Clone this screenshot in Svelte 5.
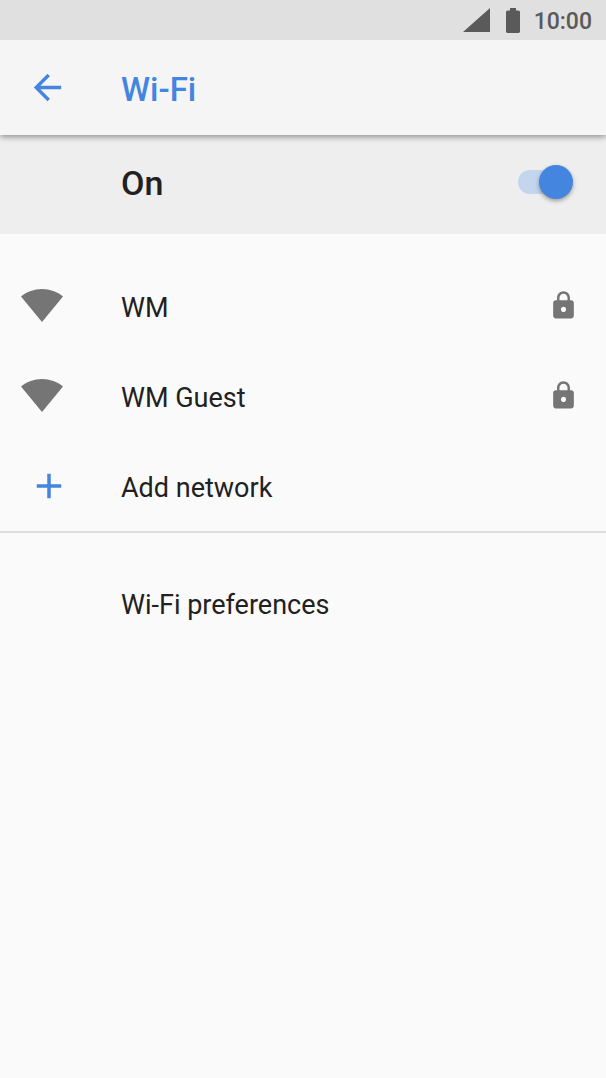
<script>
    let enabled = true;

    const networks = [
        { name: 'WM', secured: true },
        { name: 'WM Guest', secured: true }
    ];
</script>

<div class="screen">
    <div class="status-bar">
        <svg class="signal" viewBox="0 0 27 24" aria-hidden="true">
            <path d="M0 24L27 0V24Z" />
        </svg>
        <svg class="battery" viewBox="0 0 14 25" aria-hidden="true">
            <path d="M4 0h6v2.5h2.2c1 0 1.8.8 1.8 1.8v18.9c0 1-.8 1.8-1.8 1.8H1.8C.8 25 0 24.2 0 23.2V4.300c0-1 .8-1.800 1.800-1.800H4z" />
        </svg>
        <span class="time">10:00</span>
    </div>

    <header class="toolbar">
        <button class="back" aria-label="Back">
            <svg viewBox="0 0 24 24" aria-hidden="true">
                <path d="M20 11H7.830l5.590-5.590L12 4l-8 8 8 8 1.410-1.410L7.830 13H20v-2z" />
            </svg>
        </button>
        <h1>Wi-Fi</h1>
    </header>

    <div class="switch-bar">
        <label for="wifi-switch">{enabled ? 'On' : 'Off'}</label>
        <input id="wifi-switch" class="switch" type="checkbox" role="switch" bind:checked={enabled} />
    </div>

    <main>
        <div class="group">
            {#each networks as network}
                <button class="row">
                    <span class="icon">
                        <svg class="wifi" viewBox="0 0 42 33" aria-hidden="true">
                            <path d="M21 33L0 7.500C6 2.800 13 0 21 0s15 2.800 21 7.500z" />
                        </svg>
                    </span>
                    <span class="name">{network.name}</span>
                    {#if network.secured}
                        <svg class="lock" viewBox="0 0 24 24" aria-hidden="true">
                            <path d="M18 8h-1V6c0-2.760-2.240-5-5-5S7 3.240 7 6v2H6c-1.100 0-2 .9-2 2v10c0 1.100.9 2 2 2h12c1.100 0 2-.9 2-2V10c0-1.100-.9-2-2-2zm-6 9c-1.100 0-2-.9-2-2s.9-2 2-2 2 .9 2 2-.9 2-2 2zm3.100-9H8.900V6c0-1.710 1.390-3.100 3.100-3.100s3.100 1.390 3.100 3.100v2z" />
                        </svg>
                    {/if}
                </button>
            {/each}
            <button class="row">
                <span class="icon">
                    <svg class="add" viewBox="0 0 24 24" aria-hidden="true">
                        <path d="M19 13h-6v6h-2v-6H5v-2h6V5h2v6h6v2z" />
                    </svg>
                </span>
                <span class="name">Add network</span>
            </button>
        </div>

        <div class="group">
            <button class="row">
                <span class="icon"></span>
                <span class="name">Wi-Fi preferences</span>
            </button>
        </div>
    </main>
</div>

<style>
    :global(body) {
        background: #fafafa;
    }

    .screen {
        min-height: 100vh;
        background: #fafafa;
        color: #212121;
        font-family: Roboto, 'Noto Sans', sans-serif;
    }

    svg {
        display: block;
        flex: none;
        fill: currentColor;
    }

    button {
        border: 0;
        background: none;
        color: inherit;
        font: inherit;
        text-align: left;
        cursor: pointer;
    }

    .status-bar {
        position: relative;
        z-index: 1;
        display: flex;
        align-items: center;
        justify-content: flex-end;
        height: 40px;
        padding-right: 14px;
        background: #e0e0e0;
        color: #5a5a5a;
    }

    .signal {
        width: 27px;
        height: 24px;
        margin-right: 16px;
    }

    .battery {
        width: 14px;
        height: 25px;
        margin-right: 14px;
    }

    .time {
        padding-top: 4px;
        font-size: 23px;
        line-height: 28px;
        font-weight: 500;
    }

    .toolbar {
        position: relative;
        display: flex;
        align-items: center;
        height: 95px;
        background: #f5f5f5;
        color: #4485e0;
        box-shadow: 0 2px 6px rgba(0, 0, 0, 0.4);
    }

    .back {
        flex: none;
        width: 121px;
        padding: 0 0 0 27px;
    }

    .back svg {
        width: 41px;
        height: 41px;
    }

    h1 {
        margin: 0;
        padding-top: 4px;
        font-size: 33px;
        line-height: 40px;
        font-weight: 500;
    }

    .switch-bar {
        display: flex;
        align-items: center;
        justify-content: space-between;
        height: 99px;
        padding: 0 33px 0 121px;
        background: #eeeeee;
    }

    .switch-bar label {
        flex: 1;
        padding-bottom: 3px;
        font-size: 34px;
        line-height: 40px;
        font-weight: 500;
    }

    .switch {
        position: relative;
        display: flex;
        align-items: center;
        appearance: none;
        width: 55px;
        height: 34px;
        margin: 0 0 5px;
        cursor: pointer;
    }

    .switch::before {
        content: '';
        width: 48px;
        height: 24px;
        border-radius: 12px;
        background: #c2c2c2;
    }

    .switch::after {
        content: '';
        position: absolute;
        top: 0;
        left: 0;
        width: 34px;
        height: 34px;
        border-radius: 50%;
        background: #fafafa;
        box-shadow: 0 2px 4px rgba(0, 0, 0, 0.35);
    }

    .switch:checked::before {
        background: #c4d5ee;
    }

    .switch:checked::after {
        left: 21px;
        background: #4485e0;
    }

    .group {
        padding-top: 28px;
    }

    .group + .group {
        margin-top: -1px;
        border-top: 2px solid #dedede;
        padding-top: 26px;
    }

    .row {
        display: flex;
        align-items: center;
        width: 100%;
        height: 90px;
        padding: 0 27px 0 0;
        font-size: 27px;
        line-height: 32px;
    }

    .icon {
        flex: none;
        width: 121px;
        padding-bottom: 3px;
        box-sizing: border-box;
        color: #757575;
    }

    .name {
        flex: 1;
        padding-top: 1px;
    }

    .wifi {
        width: 42px;
        height: 33px;
        margin-left: 21px;
    }

    .add {
        width: 42px;
        height: 42px;
        margin-left: 28px;
        color: #4485e0;
    }

    .lock {
        width: 31px;
        height: 31px;
        margin-bottom: 3px;
        color: #757575;
    }
</style>
